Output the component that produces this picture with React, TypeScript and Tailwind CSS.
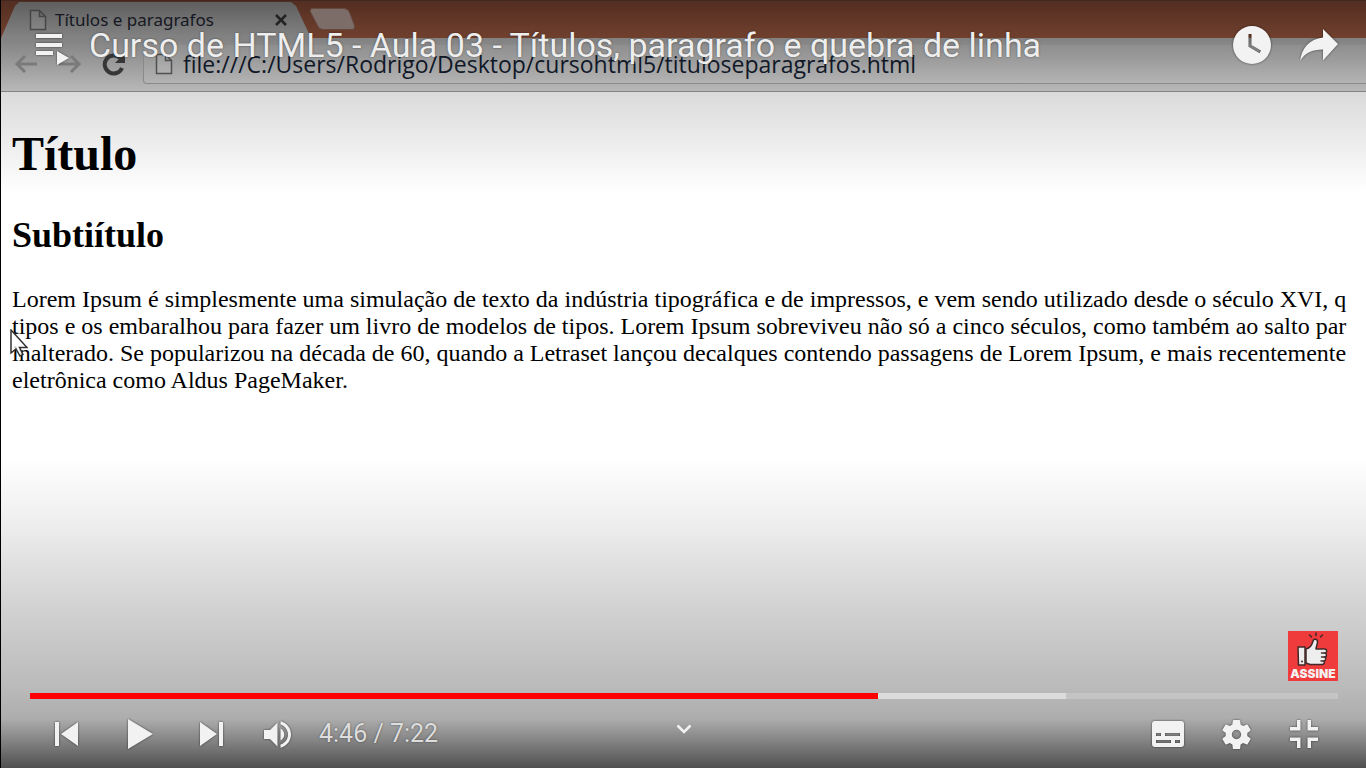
import { useState } from "react";
import type { ReactNode } from "react";

const ICON = "fill-[#f2f2f2] drop-shadow-[0_0_1px_rgba(0,0,0,0.6)]";

function ControlButton({ label, wide, children }: { label: string; wide: string; children: ReactNode }) {
  return (
    <button type="button" aria-label={label} className={`flex h-full items-center justify-center ${wide}`}>
      {children}
    </button>
  );
}

function PageIcon() {
  return (
    <svg viewBox="0 0 18 22" className="h-[22px] w-[18px] shrink-0 fill-white/10 stroke-[#3c3c3c] stroke-[1.5] opacity-80">
      <path d="M1.500 1.500h9l6 6v13h-15zM10.500 1.500v6h6" />
    </svg>
  );
}

function BrowserChrome() {
  return (
    <div className="shrink-0">
      <div className="flex h-[38px] items-start border-t border-[#43281f] bg-linear-to-b from-[#532e22] to-[#71402e]">
        <div className="mt-px flex h-9 w-[310px] items-center bg-linear-to-b from-[#5f5f5f] to-[#838383] pr-[22px] pl-7 [clip-path:polygon(0_100%,14px_4px,18px_0,290px_0,295px_4px,310px_100%)]">
          <PageIcon />
          <span className="ml-2 flex-1 font-['Noto_Sans'] text-[17px] leading-6 whitespace-nowrap text-[#151722]">
            Títulos e paragrafos
          </span>
          <svg viewBox="0 0 12 12" className="mr-[2px] h-3 w-3 stroke-[#222] stroke-[2.5]">
            <path d="M1 1l10 10M11 1L1 11" />
          </svg>
        </div>
        <svg viewBox="0 0 48 22" className="mt-[7px] -ml-[2px] h-[22px] w-12">
          <path d="M3 0.500h32q4 0 5.500 4l5 13q1 4-3 4H14q-4 0-5.500-4L1.500 4q-1-3 1.500-3.500z" fill="#7d6d69" stroke="#65483e" />
        </svg>
      </div>
      <div className="flex h-[54px] border-b border-[#828282] bg-linear-to-b from-[#818181] to-[#b8b8b8] pt-[6px] pb-[7px]">
        <div className="flex w-[142px] shrink-0 items-center pl-[13px]">
          <svg viewBox="0 0 24 20" className="h-5 w-6 fill-none stroke-[#7a7a7a] stroke-[3]">
            <path d="M23 10H4M11 2l-8 8 8 8" />
          </svg>
          <svg viewBox="0 0 24 20" className="ml-5 h-5 w-6 fill-none stroke-[#7a7a7a] stroke-[3]">
            <path d="M1 10h19M13 2l8 8-8 8" />
          </svg>
          <svg viewBox="0 0 24 24" className="ml-5 h-6 w-6 fill-none stroke-[#363636] stroke-[4]">
            <path d="M20 16a9 9 0 1 1-2-10" />
            <path d="M23 1v10H13z" fill="#363636" stroke="none" />
          </svg>
        </div>
        <div className="flex min-w-0 flex-1 items-center rounded-l border border-r-0 border-[#898989] bg-white/5 pl-[11px]">
          <PageIcon />
          <span className="ml-[10px] font-['Open_Sans'] text-[23px] leading-7 whitespace-nowrap text-[#101828]">
            file:///C:/Users/Rodrigo/Desktop/cursohtml5/tituloseparagrafos.html
          </span>
        </div>
      </div>
    </div>
  );
}

function WebPage() {
  return (
    <article className="flex-1 overflow-hidden bg-linear-to-b from-[#dadada] via-white via-[100px] to-white pl-[11px] font-['Liberation_Serif',serif] text-black">
      <h1 className="mt-[34px] text-[48px] leading-[56px] font-bold">Título</h1>
      <h2 className="mt-8 text-[36px] leading-[42px] font-bold">Subtiítulo</h2>
      <p className="mt-[30px] text-[24px] leading-[27px] whitespace-nowrap">
        Lorem Ipsum é simplesmente uma simulação de texto da indústria tipográfica e de impressos, e vem sendo utilizado desde o século XVI, q
        <br />
        tipos e os embaralhou para fazer um livro de modelos de tipos. Lorem Ipsum sobreviveu não só a cinco séculos, como também ao salto par
        <br />
        inalterado. Se popularizou na década de 60, quando a Letraset lançou decalques contendo passagens de Lorem Ipsum, e mais recentemente
        <br />
        eletrônica como Aldus PageMaker.
      </p>
    </article>
  );
}

function PlayerHeader() {
  return (
    <header className="flex h-[90px] items-center pr-[27px] pl-[35px]">
      <button type="button" aria-label="Fila de reprodução" className="mt-2">
        <svg viewBox="0 0 33 31" className={`h-[31px] w-[33px] ${ICON}`}>
          <path d="M0 0h26v4H0zM0 9h26v4H0zM0 17h17v4H0zM21 17l12 7-12 7z" />
        </svg>
      </button>
      <h1 className="ml-[20px] flex-1 truncate font-[Roboto] text-[34px] leading-10 text-[#eeeeee] [text-shadow:0_0_2px_rgba(0,0,0,0.5)]">
        Curso de HTML5 - Aula 03 - Títulos, paragrafo e quebra de linha
      </h1>
      <button type="button" aria-label="Assistir mais tarde" className="mr-7">
        <svg viewBox="0 0 38 38" className={`h-[38px] w-[38px] ${ICON}`}>
          <path
            fillRule="evenodd"
            d="M19 0a19 19 0 1 0 0 38 19 19 0 1 0 0-38zM15.500 8h3v11l9.500 5.500-1.500 2.800-11-6.500z"
          />
        </svg>
      </button>
      <button type="button" aria-label="Compartilhar">
        <svg viewBox="0 0 40 34" className={`h-[34px] w-10 ${ICON}`}>
          <path d="M24 1l15 15-15 16.500V21.500C13 21.500 6 25 1 33 3 20 10 11 24 9.500z" />
        </svg>
      </button>
    </header>
  );
}

function SubscribeButton() {
  return (
    <button
      type="button"
      className="flex h-[50px] w-[50px] flex-col items-center self-end bg-[#ef3b3b] font-[Inter] text-[12px] leading-[14px] font-black text-[#f4f0f0]"
    >
      <svg viewBox="0 0 32 36" className="h-9 w-8 shrink-0">
        <g stroke="#42282a" strokeWidth="1.500" strokeLinejoin="round" strokeLinecap="round">
          <path d="M19 2v2.500M12.500 4l2 2M25.500 4l-2 2" fill="none" />
          <path d="M1 16h7v18H1.500z" fill="#eee" />
          <path
            d="M9 18c4-1 6-3.500 7-8 .5-2.500 4.500-2.500 4.500 1 0 3-1.500 4.500-1.500 7h8.500c2.800 0 2.800 4 .5 4 2 .3 2 4-.3 4 1.500.8 1.300 3.800-.7 4 1 1.500 0 3.500-2 3.500H13l-4-1.500z"
            fill="#eee"
          />
          <path d="M24.500 22h3.500M24.500 26h3.500M24 30h3" fill="none" />
        </g>
        <circle cx="5" cy="30.500" r="1" fill="#42282a" />
      </svg>
      ASSINE
    </button>
  );
}

function PlayerControls() {
  const [position, setPosition] = useState(648);
  const played = position / 10;
  const track = `linear-gradient(to right, #ff0000 ${played}%, #dcdcdc ${played}%, #dcdcdc 79.2%, #c4c4c4 79.2%)`;

  return (
    <footer className="flex flex-col">
      <div className="flex flex-col px-7">
        <SubscribeButton />
        <input
          type="range"
          aria-label="Progresso do vídeo"
          min={0}
          max={1000}
          value={position}
          onChange={(e) => setPosition(Number(e.target.value))}
          style={{ background: track }}
          className="mt-3 ml-[1px] h-[6px] appearance-none [&::-webkit-slider-thumb]:h-0 [&::-webkit-slider-thumb]:w-0 [&::-webkit-slider-thumb]:appearance-none"
        />
      </div>
      <div className="grid h-[69px] grid-cols-[1fr_auto_1fr] items-stretch pt-px">
        <div className="flex items-center pl-[30px]">
          <ControlButton label="Anterior" wide="w-[72px]">
            <svg viewBox="12 12 12 12" className={`h-6 w-6 ${ICON}`}>
              <path d="M12 12h2v12h-2zM15 18l8.500 6V12z" />
            </svg>
          </ControlButton>
          <ControlButton label="Reproduzir" wide="w-[72px]">
            <svg viewBox="0 0 28 30" className={`h-[30px] w-7 ${ICON}`}>
              <path d="M3 0v30l25-15z" />
            </svg>
          </ControlButton>
          <ControlButton label="Próximo" wide="w-[72px]">
            <svg viewBox="12 12 12 12" className={`h-6 w-6 ${ICON}`}>
              <path d="M12.500 24l8.500-6-8.500-6zM22 12v12h2V12z" />
            </svg>
          </ControlButton>
          <ControlButton label="Volume" wide="w-[60px]">
            <svg viewBox="8 9 18 18" className={`h-[27px] w-[27px] ${ICON}`}>
              <path d="M8 21h4l5 5V10l-5 5H8zM19 14v8c1.480-.680 2.500-2.230 2.500-4 0-1.740-1.020-3.260-2.500-4zM19 11.290c2.890.860 5 3.540 5 6.710s-2.110 5.850-5 6.710v2.060c4.010-.910 7-4.490 7-8.770s-2.990-7.860-7-8.770z" />
            </svg>
          </ControlButton>
          <span className="pl-3 font-[Roboto] text-[25px] leading-8 text-[#dddddd] [text-shadow:0_0_2px_rgba(0,0,0,0.5)]">
            4:46 / 7:22
          </span>
        </div>
        <button type="button" aria-label="Mais vídeos" className="mb-[10px] px-2">
          <svg viewBox="0 0 16 10" className="h-[10px] w-4 fill-none stroke-[#f2f2f2] stroke-[2.5]">
            <path d="M1.500 1.500L8 8l6.500-6.500" />
          </svg>
        </button>
        <div className="flex items-center justify-end pr-7">
          <ControlButton label="Legendas" wide="w-[68px]">
            <svg viewBox="0 0 32 26" className={`h-[26px] w-8 ${ICON}`}>
              <path
                fillRule="evenodd"
                d="M3 0h26a3 3 0 0 1 3 3v20a3 3 0 0 1-3 3H3a3 3 0 0 1-3-3V3a3 3 0 0 1 3-3zM4 12h5v3H4zM13 12h15v3H13zM4 19h15v3H4zM23 19h5v3h-5z"
              />
            </svg>
          </ControlButton>
          <ControlButton label="Configurações" wide="w-[68px]">
            <svg viewBox="2.400 2.400 19.200 19.200" className={`h-[29px] w-[29px] ${ICON}`}>
              <path
                fillRule="evenodd"
                d="M19.140 12.940c.040-.300.060-.610.060-.940 0-.320-.020-.640-.070-.940l2.030-1.580a.490.490 0 0 0 .120-.610l-1.920-3.320a.488.488 0 0 0-.590-.220l-2.390.960c-.500-.380-1.030-.700-1.620-.940l-.360-2.540a.484.484 0 0 0-.480-.410h-3.840c-.240 0-.430.170-.470.410l-.360 2.540c-.590.240-1.130.570-1.620.940l-2.390-.960c-.220-.080-.470 0-.590.220L2.740 8.870c-.120.210-.080.470.120.610l2.030 1.580c-.050.300-.090.630-.090.940s.020.640.070.940l-2.030 1.580a.490.490 0 0 0-.120.610l1.920 3.320c.120.220.370.290.590.220l2.390-.960c.500.380 1.030.700 1.620.940l.360 2.540c.050.240.240.410.480.410h3.840c.240 0 .440-.170.470-.410l.360-2.540c.590-.240 1.130-.560 1.620-.940l2.390.960c.220.080.470 0 .590-.220l1.920-3.320c.120-.220.070-.470-.120-.610zM12 8.900a3.100 3.100 0 1 0 0 6.200 3.100 3.100 0 0 0 0-6.200z"
              />
            </svg>
          </ControlButton>
          <ControlButton label="Sair da tela cheia" wide="w-[68px]">
            <svg viewBox="10 10 16 16" className={`h-7 w-7 ${ICON}`}>
              <path d="M14 14h-4v2h6v-6h-2zM22 14v-4h-2v6h6v-2zM20 26h2v-4h4v-2h-6zM10 22h4v4h2v-6h-6z" />
            </svg>
          </ControlButton>
        </div>
      </div>
    </footer>
  );
}

export default function App() {
  return (
    <main className="relative flex h-screen flex-col overflow-hidden border-l border-black bg-white">
      <BrowserChrome />
      <WebPage />
      <svg viewBox="0 0 18 28" className="absolute top-[329px] left-[9px] h-7 w-[18px] fill-white/80 stroke-[#333] stroke-[1.5]">
        <path d="M1 1v23l5-4 4 7 3-1.500-3.500-7H17z" />
      </svg>
      <div className="absolute inset-x-0 bottom-0 h-[310px] bg-[linear-gradient(to_bottom,transparent_0,rgba(0,0,0,0.07)_22%,rgba(0,0,0,0.17)_46%,rgba(0,0,0,0.27)_74%,rgba(0,0,0,0.32)_84%,rgba(0,0,0,0.5)_92%,rgba(0,0,0,0.69)_100%)]" />
      <div className="absolute inset-0 flex flex-col justify-between">
        <PlayerHeader />
        <PlayerControls />
      </div>
    </main>
  );
}
